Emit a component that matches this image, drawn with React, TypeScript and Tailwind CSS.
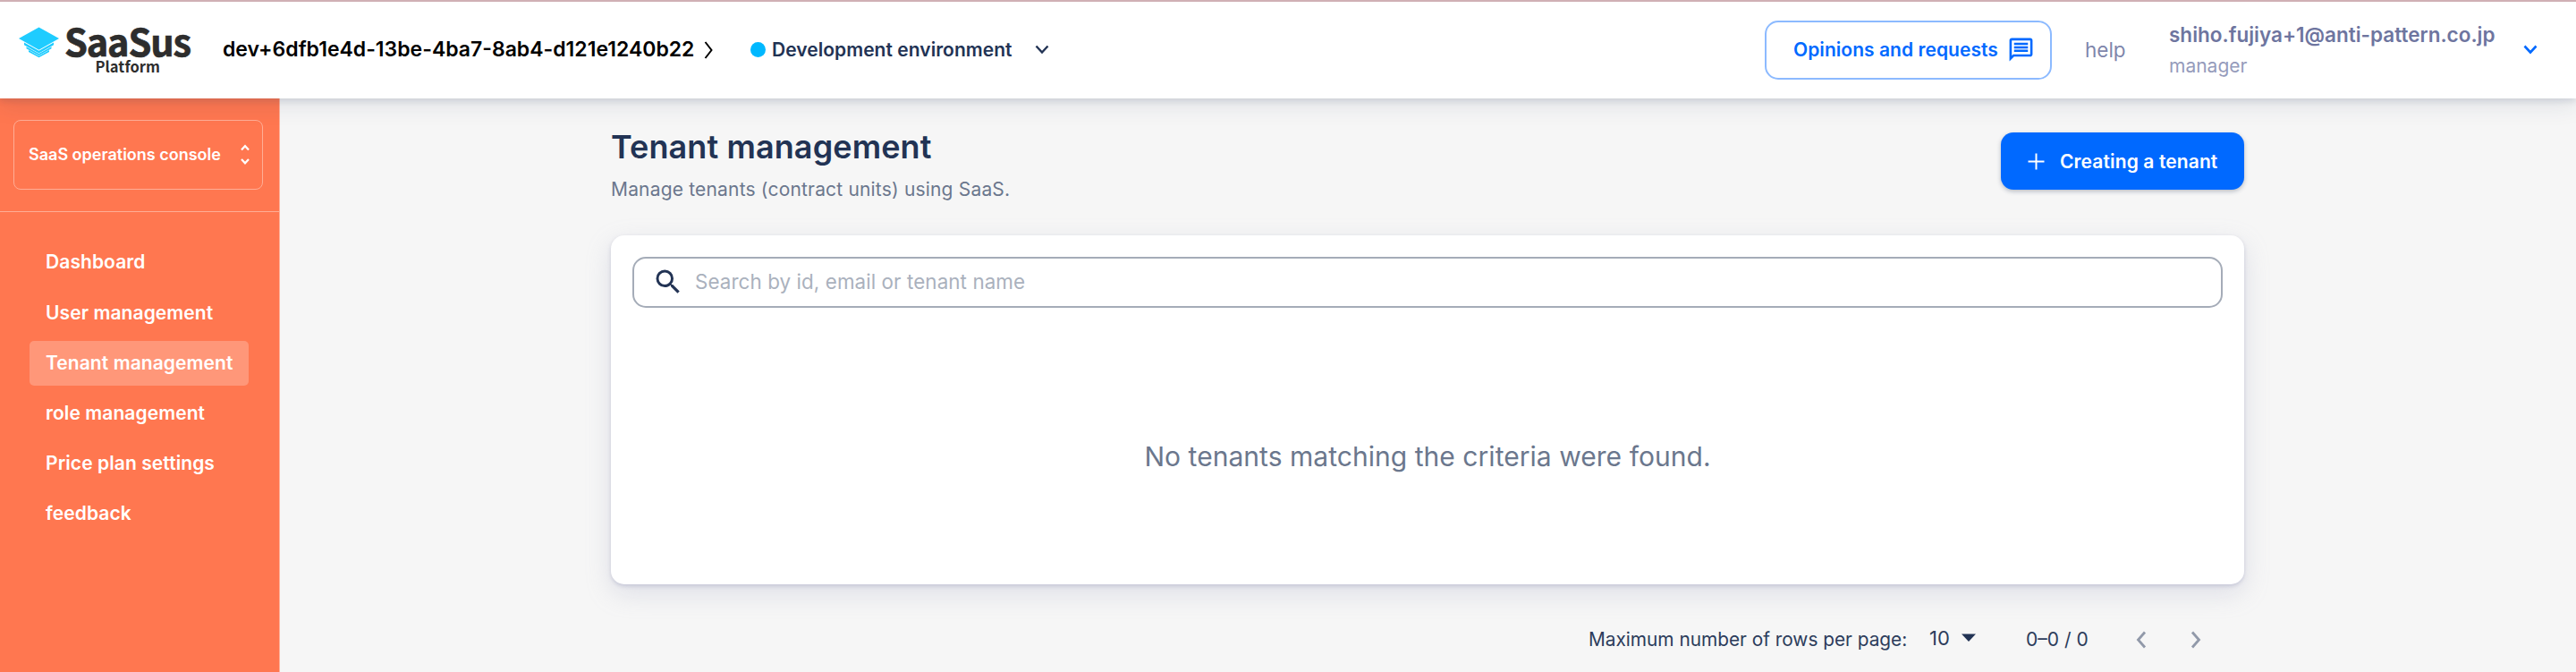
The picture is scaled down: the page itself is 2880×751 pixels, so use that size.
import { MdOutlineMessage, MdSearch } from "react-icons/md";

const NAV = [
  "Dashboard",
  "User management",
  "Tenant management",
  "role management",
  "Price plan settings",
  "feedback",
];

type ChevronProps = { points: string; width: number; height: number; stroke: number; className?: string };

function Chevron({ points, width, height, stroke, className = "" }: ChevronProps) {
  return (
    <svg
      width={width}
      height={height}
      viewBox={`0 0 ${width} ${height}`}
      fill="none"
      stroke="currentColor"
      strokeWidth={stroke}
      className={`shrink-0 ${className}`}
    >
      <polyline points={points} />
    </svg>
  );
}

function Logo() {
  return (
    <svg width="220" height="70" viewBox="0 0 220 70" className="shrink-0 overflow-visible">
      <g fill="#1fccff">
        <path d="M43.5 9.5 66 22 43.5 34.8 21 22Z" />
        <path d="M27 26.6 43.5 35.7 60 26.6V29.3L43.5 38.4 27 29.3Z" />
        <path d="M29.5 31.2 43.5 39.1 57.5 31.2V33.2L43.5 41 29.5 33.2Z" />
        <path d="M32 35 43.5 41.6 55 35V37L43.5 43.3 32 37Z" />
      </g>
      <g fill="#2d2d2d" className="font-['Noto_Sans_CJK_JP',sans-serif] font-bold">
        <text x="72" y="41.5" fontSize="41.5" textLength="142" lengthAdjust="spacing" stroke="#2d2d2d" strokeWidth="0.7">SaaSus</text>
        <text x="106.5" y="60.3" fontSize="16.5" textLength="72.5" lengthAdjust="spacing">Platform</text>
      </g>
    </svg>
  );
}

function Header() {
  return (
    <header className="relative z-10 flex h-[109.5px] w-full shrink-0 items-center border-t-2 border-[#d0b0b5] bg-white shadow-[0_4px_6px_rgba(34,51,84,0.10),0_8px_24px_rgba(34,51,84,0.10)]">
      <Logo />
      <div className="ml-[29px] flex w-[548px] items-center justify-between text-black">
        <span className="text-[23px] font-semibold leading-none whitespace-nowrap">
          dev+6dfb1e4d-13be-4ba7-8ab4-d121e1240b22
        </span>
        <Chevron points="1.5,1 8.5,10 1.5,19" width={10} height={20} stroke={2} />
      </div>
      <div className="ml-[42px] flex items-center text-[#223354]">
        <span className="h-[17px] w-[17px] rounded-full bg-[#00b8ff]" />
        <span className="ml-[7px] w-[294px] text-[21px] font-semibold leading-none tracking-[0.04px] whitespace-nowrap">Development environment</span>
        <Chevron points="1.5,1.5 8,8.5 14.5,1.5" width={16} height={11} stroke={2.4} />
      </div>
      <div className="ml-auto flex h-full items-center pr-[43px]">
        <button className="flex h-[66px] w-[321px] items-center rounded-[15px] border-2 border-[#8cbaff] pl-[30px] text-[#0069ff]">
          <span className="w-[239px] text-left text-[21px] font-semibold leading-none tracking-[0.05px] whitespace-nowrap">Opinions and requests</span>
          <MdOutlineMessage size={31} />
        </button>
        <span className="ml-[37px] w-[94px] text-[22.5px] leading-none text-[#6e759f]/90">help</span>
        <div className="flex w-[396px] flex-col">
          <span className="text-[22.5px] font-semibold leading-[36px] text-[#6e759f] whitespace-nowrap">shiho.fujiya+1@anti-pattern.co.jp</span>
          <span className="text-[21px] leading-[34px] text-[#959bbb]">manager</span>
        </div>
        <Chevron points="1.5,1.5 8,8.5 14.5,1.5" width={16} height={11} stroke={2.6} className="text-[#0069ff]" />
      </div>
    </header>
  );
}

function Sidebar() {
  return (
    <aside className="flex w-[313px] shrink-0 flex-col border-r border-[#ffb29b] bg-[#ff7750] text-white">
      <div className="border-b border-[#ffad95] pt-[24.5px] pb-[24px] pl-[15px]">
        <div className="flex h-[78px] w-[279px] items-center justify-between rounded-[8px] border border-[#ffad95] pl-[16px] pr-[14px]">
          <span className="text-[18px] font-semibold leading-none whitespace-nowrap">SaaS operations console</span>
          <svg width="10" height="24" viewBox="0 0 10 24" fill="none" stroke="currentColor" strokeWidth="2.2">
            <path d="M1 6.5 5 2.2 9 6.5M1 17 5 21.3 9 17" />
          </svg>
        </div>
      </div>
      <nav className="flex flex-col gap-[6.2px] pt-[31.4px] pl-[33px]">
        {NAV.map((label) => (
          <a
            key={label}
            className={`flex h-[50px] w-[245px] items-center rounded-[5px] pl-[18px] pb-px text-[21px] font-semibold leading-none tracking-[0.08px] whitespace-nowrap ${
              label === "Tenant management" ? "bg-[#ff9779]" : ""
            }`}
          >
            {label}
          </a>
        ))}
      </nav>
    </aside>
  );
}

function Pagination() {
  return (
    <div className="mt-[42px] flex h-[40px] items-center justify-end pr-[48px] text-[21px] text-[#2c3c5b]">
      <span className="w-[381px] text-[20.8px] whitespace-nowrap">Maximum number of rows per page:</span>
      <span className="-mt-[4px] w-[36px] text-[22px]">10</span>
      <svg width="16" height="10" viewBox="0 0 16 10" className="-mt-[4px] shrink-0 fill-[#223354]">
        <path d="M0 .5H16L8 9Z" />
      </svg>
      <span className="ml-[56px] w-[123px]">0–0 / 0</span>
      <Chevron points="10,1.5 2.5,10 10,18.5" width={12} height={20} stroke={2.8} className="text-[#9199a9]" />
      <Chevron points="2,1.5 9.5,10 2,18.5" width={12} height={20} stroke={2.8} className="ml-[49px] text-[#9199a9]" />
    </div>
  );
}

export default function App() {
  return (
    <div className="flex h-[751px] w-[2880px] flex-col overflow-hidden bg-[#f6f6f6] font-['Inter',sans-serif]">
      <Header />
      <div className="flex min-h-0 flex-1">
        <Sidebar />
        <main className="ml-[370px] w-[1826px] pt-[30.5px]">
          <div className="flex h-[123px] items-start justify-between">
            <div>
              <h1 className="text-[36px] font-semibold leading-[48px] tracking-[0.1px] text-[#223354]">Tenant management</h1>
              <p className="mt-[8px] text-[21px] leading-[32px] tracking-[0.18px] text-[#6b778d]">Manage tenants (contract units) using SaaS.</p>
            </div>
            <button className="mt-[8px] flex h-[64px] w-[272px] items-center rounded-[14px] bg-[#0069ff] pl-[30px] text-white shadow-[0_2px_5px_rgba(34,51,84,0.3)]">
              <svg width="19" height="19" viewBox="0 0 19 19" fill="none" stroke="currentColor" strokeWidth="2">
                <path d="M9.5 .5V18.5M.5 9.5H18.5" />
              </svg>
              <span className="ml-[17px] text-[21px] font-semibold tracking-[0.12px] leading-none whitespace-nowrap">Creating a tenant</span>
            </button>
          </div>
          <section className="flex h-[390px] flex-col rounded-[15px] bg-white px-[24px] pt-[23.5px] shadow-[0_2px_4px_rgba(159,162,191,0.45),0_10px_28px_rgba(159,162,191,0.28)]">
            <div className="flex h-[57px] shrink-0 items-center rounded-[15px] border-2 border-[#a5acb8] pl-[20px]">
              <MdSearch size={36} className="text-[#223354]" />
              <span className="ml-[12px] text-[22.4px] tracking-[0.08px] text-[#aab1bd]">Search by id, email or tenant name</span>
            </div>
            <p className="mt-[146.5px] text-center text-[30px] leading-[40px] tracking-[0.04px] text-[#6b778d]">No tenants matching the criteria were found.</p>
          </section>
          <Pagination />
        </main>
      </div>
    </div>
  );
}
